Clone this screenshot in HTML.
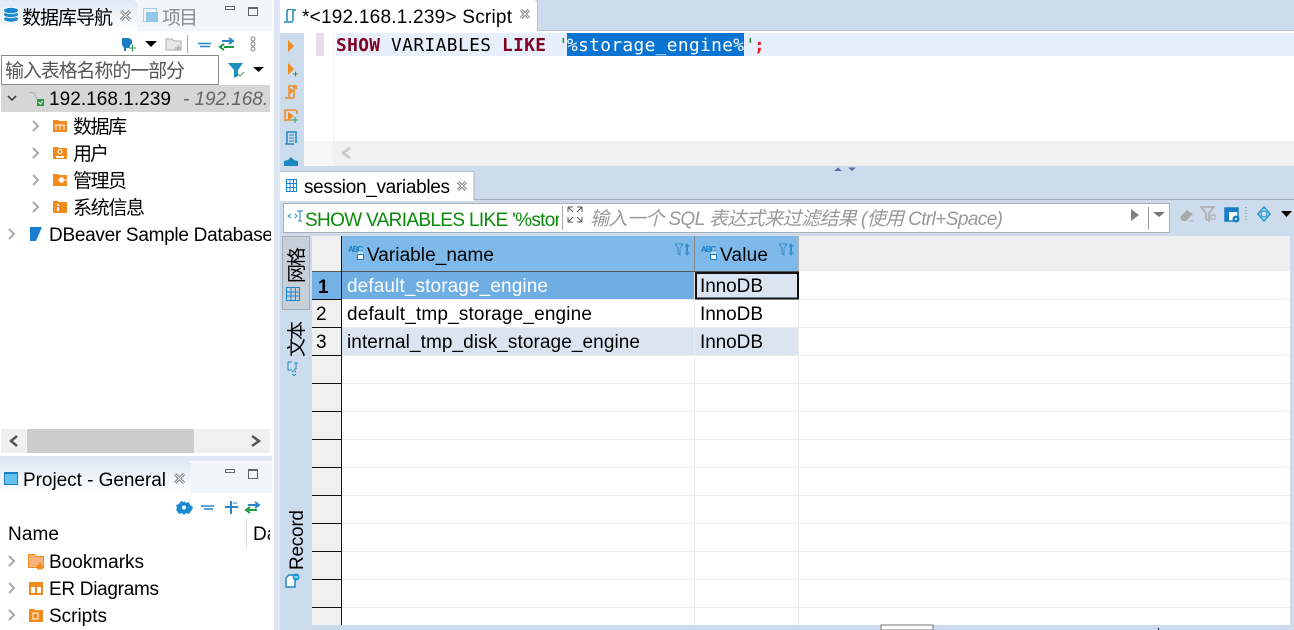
<!DOCTYPE html>
<html><head><meta charset="utf-8"><style>
html,body{margin:0;padding:0;background:#cddcec;width:1294px;height:630px;overflow:hidden}
svg{display:block}
text{font-family:"Liberation Sans","Noto Sans CJK SC",sans-serif;font-size:19px;fill:#000;white-space:pre}
.m{font-family:"DejaVu Sans Mono","Liberation Mono",monospace;font-size:17.8px}
</style></head><body>
<svg width="1294" height="630" viewBox="0 0 1294 630" xmlns="http://www.w3.org/2000/svg">
<defs>
<linearGradient id="tg" x1="0" y1="0" x2="0" y2="1"><stop offset="0" stop-color="#dfe8f3"/><stop offset="1" stop-color="#fff"/></linearGradient>
</defs>
<rect width="1294" height="630" fill="#cddcec"/>
<!-- left column -->
<rect x="0" y="0" width="280" height="630" fill="#dfe7f5"/>
<rect x="0" y="0" width="272" height="456" fill="#fff"/>
<rect x="137" y="0" width="135" height="31" fill="#f2f5fa"/>
<path d="M0 0H133Q137 0 137 4V31H0Z" fill="url(#tg)"/>
<rect x="272" y="0" width="2" height="630" fill="#fff"/>
<rect x="0" y="461" width="272" height="169" fill="#fff"/>
<rect x="191" y="461" width="81" height="32" fill="#f2f5fa"/>
<path d="M0 461H187Q191 461 191 465V493H0Z" fill="url(#tg)"/>
<rect x="272" y="461" width="2" height="169" fill="#fff"/>
<!-- left tabs -->
<g fill="#1a8ad0" stroke="#fff" stroke-width=".8"><ellipse cx="11" cy="19" rx="7.500" ry="3.200"/><ellipse cx="11" cy="14.500" rx="7.500" ry="3.200"/><ellipse cx="11" cy="10.500" rx="7.500" ry="3.200"/></g>
<text x="22" y="24" font-size="18" textLength="91">数据库导航</text>
<path d="M121 11l9 9M130 11l-9 9" stroke="#777" stroke-width="3"/><path d="M121 11l9 9M130 11l-9 9" stroke="#fff" stroke-width="1"/>
<rect x="143.500" y="8.500" width="13" height="13" fill="none" stroke="#a8cde8"/><rect x="146" y="12" width="12" height="10" fill="#8fc8e8"/>
<text x="162" y="24" font-size="18" style="fill:#8a8a8a" textLength="36">项目</text>
<rect x="225.500" y="6.500" width="9" height="3" fill="none" stroke="#666"/>
<rect x="248.500" y="7.500" width="9" height="8" fill="none" stroke="#666"/><rect x="248" y="7" width="10" height="2" fill="#666"/>
<!-- nav toolbar -->
<path d="M122 38h7l3 2v4h-1l-2 4h-3v3h-2v-3l-2-3z" fill="#1b7fc4"/><path d="M129 48h7M132.500 44.500v7" stroke="#2a9a4a"/>
<path d="M145 41h12l-6 6z" fill="#000"/>
<path d="M166 39h6l2 2h7v9h-15z" fill="#e8e8e8" stroke="#aaa"/><path d="M175 48h6M178 45v6" stroke="#999"/>
<rect x="187" y="35" width="1" height="18" fill="#aaa"/>
<path d="M198 43.500h13M200 46.500h10" stroke="#2a86cc" stroke-width="1.500"/>
<path d="M222 41h10M229 38l4 3-4 3" fill="none" stroke="#2a86cc" stroke-width="2"/><path d="M224 47h10M224 44l-4 3 4 3" fill="none" stroke="#1a9a3a" stroke-width="2"/>
<circle cx="253" cy="39" r="2" fill="none" stroke="#888"/><circle cx="253" cy="44" r="2" fill="none" stroke="#888"/><circle cx="253" cy="49" r="2" fill="none" stroke="#888"/>
<!-- filter -->
<rect x="1.500" y="55.500" width="217" height="29" fill="#fff" stroke="#8a8a8a"/>
<text x="5" y="77" font-size="18" style="fill:#555" textLength="180">输入表格名称的一部分</text>
<path d="M228 63h15l-5 7v6l-4 2v-8z" fill="#1a8fc0"/><path d="M238 74l2 2 4-4" fill="none" stroke="#3aaa5a"/>
<path d="M253 67h11l-5.500 5z" fill="#000"/>
<!-- tree -->
<rect x="1" y="85" width="269" height="27" fill="#d6d6d6"/>
<path d="M8 96l4 4 4-4" fill="none" stroke="#333" stroke-width="1.500"/>
<path d="M29 92l5 1 3 6" fill="none" stroke="#aaa"/><rect x="37" y="99" width="7" height="7" fill="#2a9a4a"/><path d="M38.500 102l2 2 2-3" fill="none" stroke="#fff"/>
<text x="49" y="105" textLength="122">192.168.1.239</text>
<text x="183" y="105" style="fill:#666;font-style:italic" textLength="85">- 192.168.</text>
<g fill="none" stroke="#aaa" stroke-width="2"><path d="M33 121l5 5-5 5"/><path d="M33 148l5 5-5 5"/><path d="M33 175l5 5-5 5"/><path d="M33 202l5 5-5 5"/></g>
<g fill="#f28a1e"><path d="M53 120h5l1 1h8v11h-14z"/><path d="M53 147h5l1 1h8v11h-14z"/><path d="M53 174h5l1 1h8v11h-14z"/><path d="M53 201h5l1 1h8v11h-14z"/></g>
<path d="M55 125h10M56 125v5M60 125v5M64 125v5" stroke="#fff"/>
<circle cx="60" cy="151.500" r="2" fill="none" stroke="#fff"/><path d="M56 157h8" stroke="#fff" stroke-width="2"/>
<path d="M58 180h9M60 178h3v4h-3z" stroke="#fff" fill="#fff"/>
<rect x="57" y="204" width="2" height="2" fill="#fff"/><rect x="57" y="207" width="2" height="4" fill="#fff"/>
<text x="73" y="133" font-size="18" textLength="54">数据库</text>
<text x="73" y="160" font-size="18" textLength="36">用户</text>
<text x="73" y="187" font-size="18" textLength="54">管理员</text>
<text x="73" y="214" font-size="18" textLength="72">系统信息</text>
<path d="M9 229l5 5-5 5" fill="none" stroke="#aaa" stroke-width="2"/>
<path d="M30 227h12l-3 9-3 5h-6z" fill="#1a7fd0"/><path d="M43 226l-6 14" stroke="#fff"/>
<svg x="49" y="215" width="222" height="30"><text x="0" y="26" textLength="224">DBeaver Sample Database</text></svg>
<!-- scrollbar -->
<rect x="1" y="429" width="269" height="24" fill="#f0f0f0"/><rect x="27" y="429" width="167" height="24" fill="#cdcdcd"/>
<path d="M17 436l-6 5 6 5M252 436l7 5-7 5" fill="none" stroke="#555" stroke-width="2.500"/>
<!-- project -->
<rect x="4.500" y="472.500" width="13" height="12" fill="#62c4ee" stroke="#1a7fc0"/><rect x="4" y="472" width="14" height="2" fill="#1a7fc0"/>
<text x="23" y="486" textLength="143">Project - General</text>
<path d="M175 474l9 9M184 474l-9 9" stroke="#777" stroke-width="3"/><path d="M175 474l9 9M184 474l-9 9" stroke="#fff" stroke-width="1"/>
<rect x="225.500" y="469.500" width="9" height="3" fill="none" stroke="#666"/>
<rect x="248.500" y="469.500" width="9" height="9" fill="none" stroke="#666"/><rect x="248" y="469" width="10" height="2" fill="#666"/>
<path d="M184 501l2 2 3-1 1 3 3 2-1 3-1 1-2 3-3-1-2 2-2-2-3 1-2-3-1-1 1-2-1-3 3-1 2-3 3 1z" fill="#1a8ad0"/><circle cx="184" cy="507.500" r="2" fill="#fff"/>
<path d="M201 506h13M204 509h9" stroke="#2a86cc" stroke-width="1.500"/>
<path d="M225 507h13M231 501v13" stroke="#2a86cc" stroke-width="2"/><path d="M233 503h4" stroke="#2a86cc"/>
<path d="M248 505h10M255 502l4 3-4 3" fill="none" stroke="#2a86cc" stroke-width="2"/><path d="M248 510h9M250 507l-4 3 4 3" fill="none" stroke="#1a9a3a" stroke-width="2"/>
<text x="8" y="540" textLength="51">Name</text>
<rect x="246" y="518" width="1" height="30" fill="#e0e0e0"/>
<svg x="0" y="518" width="270" height="30"><text x="253" y="22">Da</text></svg>
<g fill="none" stroke="#aaa" stroke-width="2"><path d="M9 556l5 5-5 5"/><path d="M9 583l5 5-5 5"/><path d="M9 610l5 5-5 5"/></g>
<path d="M28.500 554.500h6l2 2h7v11h-15z" fill="#fbb27a" stroke="#f28a1e"/><path d="M40 562l1.500 3 3 .4-2.200 2 .7 3-3-1.500-3 1.500.7-3-2.200-2 3-.4z" fill="#f28a1e"/>
<path d="M29 582h14v13h-14z" fill="#f28a1e"/><rect x="31" y="587" width="4" height="6" fill="#fff"/><rect x="37" y="587" width="4" height="6" fill="#fff"/>
<path d="M29 609h5l1 1h8v12h-14z" fill="#f28a1e"/><path d="M33 613h5v6h-5z" fill="none" stroke="#fff"/>
<text x="49" y="568" textLength="95">Bookmarks</text>
<text x="49" y="595" textLength="110">ER Diagrams</text>
<text x="49" y="622" textLength="58">Scripts</text>

<!-- right side -->
<rect x="280" y="31" width="1014" height="135" fill="#fff"/>
<path d="M280 31V0H533Q537 0 537 4V31Z" fill="#fff"/>
<rect x="537" y="30" width="757" height="1" fill="#b4c2d2"/>
<rect x="537" y="0" width="1" height="31" fill="#b4c2d2"/>
<path d="M287 10v11M284 22h9M293 21V10h3" fill="none" stroke="#1c86c4" stroke-width="1.500"/><path d="M287 9.500h6" stroke="#1c86c4"/>
<text x="302" y="23" textLength="210">*&lt;192.168.1.239&gt; Script</text>
<path d="M521 10l8 8M529 10l-8 8" stroke="#777" stroke-width="3"/><path d="M521 10l8 8M529 10l-8 8" stroke="#fff" stroke-width="1"/>
<!-- editor -->
<rect x="280" y="33" width="24" height="133" fill="#cddcec"/>
<rect x="316" y="33" width="8" height="23" fill="#ead9ea"/>
<rect x="336" y="33" width="958" height="23" fill="#e6effb"/>
<rect x="333" y="33" width="1" height="108" fill="#f2f2f2"/>
<rect x="567" y="33" width="177" height="23" fill="#0a74d2"/>
<rect x="304" y="141" width="990" height="25" fill="#f0f0f0"/>
<rect x="304" y="141" width="29" height="25" fill="#f6f6f6"/>
<path d="M350 148l-7 5 7 5" fill="none" stroke="#c8c8c8" stroke-width="2.500"/>
<text class="m" x="336" y="51" style="fill:#7f0020;font-weight:bold" textLength="44">SHOW</text>
<text class="m" x="391" y="51" style="fill:#000" textLength="100">VARIABLES</text>
<text class="m" x="502" y="51" style="fill:#7f0020;font-weight:bold" textLength="44">LIKE</text>
<text class="m" x="558" y="51" style="fill:#2a8a2a">'</text>
<text class="m" x="567" y="51" style="fill:#fff" textLength="177">%storage_engine%</text>
<text class="m" x="745" y="51" style="fill:#2a8a2a">'</text>
<text class="m" x="754" y="51" style="fill:#e02020;font-weight:bold">;</text>
<!-- editor side icons -->
<path d="M288 40l6 6-6 6z" fill="#f28a1e"/>
<path d="M288 63l6 6-6 6z" fill="#f28a1e"/><path d="M293 74h5M295.500 71.500v5" stroke="#3a9a4a"/>
<path d="M285 98h9M289 97V86h8M296 86v3M294 86v12" fill="none" stroke="#f28a1e" stroke-width="1.500"/><path d="M290 88l4 3-4 3z" fill="#f28a1e"/>
<path d="M284 120h8M285 119v-9h10l2 1v3" fill="none" stroke="#f28a1e" stroke-width="1.500"/><path d="M288 112l6 4-6 4z" fill="#f28a1e"/><path d="M292 120h6M295 117v6" stroke="#3a9a4a"/>
<path d="M285 144h9M287 144V132h9v11" fill="none" stroke="#1c86c4" stroke-width="1.500"/><path d="M289 135h5M289 138h5M289 141h5" stroke="#1c86c4"/>
<path d="M284 166v-5l4-1 3-3 3 3 4 1v5z" fill="#1c86c4"/>
<rect x="280" y="166" width="1014" height="34" fill="#cddcec"/>
<path d="M834 171l4-3.500 4 3.500zM848 167.500h8l-4 3.500z" fill="#5f67a5"/>
<!-- results tab -->
<rect x="280" y="172" width="194" height="29" fill="#fff"/>
<path d="M474 172v28" stroke="#a9b4c2"/><path d="M280 171.500h194" stroke="#b4c2d2"/>
<rect x="474" y="199" width="820" height="1" fill="#a6b0bc"/>
<g fill="none" stroke="#1a86d0"><rect x="286.500" y="179.500" width="10" height="12"/><path d="M286 183.500h11M286 187.500h11M290 180v11M293.500 180v11"/></g>
<text x="304" y="193" textLength="146">session_variables</text>
<path d="M458 182l8 8M466 182l-8 8" stroke="#777" stroke-width="3"/><path d="M458 182l8 8M466 182l-8 8" stroke="#fff" stroke-width="1"/>
<!-- filter bar -->
<rect x="283.500" y="203.500" width="886" height="29" fill="#fff" stroke="#aab0b8"/>
<path d="M291 214l-3 2 3 2M295 214l2 2-2 2" fill="none" stroke="#1c86c4"/><path d="M297 211h6M300 211v10M298 221h4" fill="none" stroke="#1c86c4"/>
<svg x="305" y="205" width="254" height="26"><text x="0" y="21" style="fill:#0a8a0a" textLength="256">SHOW VARIABLES LIKE '%stor</text></svg>
<rect x="562" y="206" width="1" height="24" fill="#aaa"/>
<path d="M568 207h5M568 207v5M568 207l5 5M582 207h-5M582 207v5M582 207l-5 5M568 222h5M568 222v-5M568 222l5-5M582 222h-5M582 222v-5M582 222l-5-5" fill="none" stroke="#555"/>
<text x="590" y="225" style="fill:#999;font-style:italic" textLength="413">输入一个 SQL 表达式来过滤结果 (使用 Ctrl+Space)</text>
<path d="M1131 209l8 6-8 6z" fill="#808080"/>
<rect x="1148" y="207" width="1" height="22" fill="#999"/>
<path d="M1153 212h12l-6 5z" fill="#777"/>
<path d="M1180 217l7-7 6 4-7 7h-4z" fill="#aaa"/><path d="M1189 221h4" stroke="#aaa"/>
<path d="M1201 207h13l-5 6v8l-3-2v-6z" fill="none" stroke="#aaa" stroke-width="1.500"/><rect x="1211" y="215" width="4" height="4" fill="none" stroke="#aaa"/>
<rect x="1225" y="208" width="13" height="13" fill="#fff" stroke="#1a7fc4" stroke-width="1.500"/><rect x="1225" y="208" width="13" height="4" fill="#1a7fc4"/><rect x="1225" y="208" width="4" height="13" fill="#1a7fc4"/><circle cx="1236" cy="219" r="3.500" fill="#1a7fc4"/><circle cx="1236" cy="219" r="1" fill="#fff"/>
<path d="M1246 207v1M1246 210v1M1246 213v1M1246 216v1M1246 219v1" stroke="#aaa" stroke-width="2"/>
<path d="M1264 207l6 7-6 7-6-7z" fill="none" stroke="#1c96d0" stroke-width="1.500"/><circle cx="1264" cy="214" r="3" fill="none" stroke="#1c96d0"/>
<path d="M1281 211h11l-5.500 6z" fill="#000"/>
<!-- left strip of results -->
<rect x="282.500" y="236.500" width="27" height="73" fill="#c6d0da" stroke="#a6aeb6"/>
<g fill="none" stroke="#1a86d0"><rect x="286.500" y="287.500" width="13" height="13"/><path d="M286 292h14M286 296h14M291 288v13M295.500 288v13"/></g>
<text transform="translate(303,283) rotate(-90)" font-size="17" textLength="36">网格</text>
<text transform="translate(303,357) rotate(-90)" font-size="17" textLength="36">文本</text>
<path d="M288 362h4M288 362v8h4M294 363h4M296 363v6M294 369h2" fill="none" stroke="#1c86c4"/><path d="M292 372l2-1.500 2 1.500M292 374l2 1.500 2-1.500" fill="none" stroke="#1c86c4"/>
<text transform="translate(303,570) rotate(-90)" font-size="18" textLength="60">Record</text>
<path d="M286 587v-9l3-3h6v12z" fill="#fff" stroke="#1c86c4" stroke-width="1.500"/><circle cx="296" cy="577" r="3.500" fill="#1c96d8"/><path d="M294 577h4" stroke="#fff"/>
<!-- grid -->
<rect x="312" y="236" width="978" height="389" fill="#fff"/>
<rect x="312" y="236" width="30" height="389" fill="#f0f0f0"/>
<rect x="799" y="236" width="491" height="35" fill="#efefef"/>
<rect x="342" y="236" width="456" height="35" fill="#7fb9ea"/>
<rect x="694" y="236" width="1" height="35" fill="#8a8a8a"/>
<rect x="798" y="236" width="1" height="35" fill="#a8b0b8"/>
<rect x="312" y="271" width="487" height="1" fill="#555"/>
<rect x="312" y="272" width="30" height="27" fill="#74b2e6"/>
<rect x="342" y="272" width="352" height="27" fill="#6eaee3"/>
<rect x="342" y="328" width="352" height="27" fill="#dbe5f1"/>
<rect x="695" y="328" width="103" height="27" fill="#dbe5f1"/>
<g fill="#ececec">
<rect x="342" y="299" width="948" height="1"/><rect x="342" y="327" width="948" height="1"/><rect x="342" y="355" width="948" height="1"/><rect x="342" y="383" width="948" height="1"/><rect x="342" y="411" width="948" height="1"/><rect x="342" y="439" width="948" height="1"/><rect x="342" y="467" width="948" height="1"/><rect x="342" y="495" width="948" height="1"/><rect x="342" y="523" width="948" height="1"/><rect x="342" y="551" width="948" height="1"/><rect x="342" y="579" width="948" height="1"/><rect x="342" y="607" width="948" height="1"/>
<rect x="694" y="272" width="1" height="353"/><rect x="798" y="272" width="1" height="353"/>
</g>
<g fill="#111">
<rect x="312" y="299" width="30" height="1"/><rect x="312" y="327" width="30" height="1"/><rect x="312" y="355" width="30" height="1"/><rect x="312" y="383" width="30" height="1"/><rect x="312" y="411" width="30" height="1"/><rect x="312" y="439" width="30" height="1"/><rect x="312" y="467" width="30" height="1"/><rect x="312" y="495" width="30" height="1"/><rect x="312" y="523" width="30" height="1"/><rect x="312" y="551" width="30" height="1"/><rect x="312" y="579" width="30" height="1"/><rect x="312" y="607" width="30" height="1"/>
<rect x="341" y="236" width="1" height="389"/>
</g>
<rect x="696" y="273" width="102" height="25.500" fill="#dbe5f1" stroke="#111" stroke-width="2"/>
<text x="348" y="252" style="fill:#1a7fc4;font-size:8px;font-weight:bold" textLength="15">ABC</text>
<rect x="357.500" y="254.500" width="6" height="5" fill="#fff" stroke="#1a7fc4"/><path d="M359 254v-2h3v2" fill="none" stroke="#fff"/>
<text x="701" y="252" style="fill:#1a7fc4;font-size:8px;font-weight:bold" textLength="15">ABC</text>
<rect x="710.500" y="254.500" width="6" height="5" fill="#fff" stroke="#1a7fc4"/><path d="M712 254v-2h3v2" fill="none" stroke="#fff"/>
<text x="367" y="261" textLength="127">Variable_name</text>
<text x="720" y="261" textLength="48">Value</text>
<g fill="none" stroke="#3a8ec8">
<path d="M675 244h8l-3 4v7l-2-1v-6z"/><path d="M687 244v11" stroke-width="2"/><path d="M685 247l2-3 2 3M685 252l2 3 2-3"/>
<path d="M779 244h8l-3 4v7l-2-1v-6z"/><path d="M791 244v11" stroke-width="2"/><path d="M789 247l2-3 2 3M789 252l2 3 2-3"/>
</g>
<text x="318" y="293" style="font-weight:bold">1</text>
<text x="316" y="320">2</text>
<text x="316" y="348">3</text>
<text x="347" y="292" style="fill:#fff" textLength="201">default_storage_engine</text>
<text x="347" y="320" textLength="245">default_tmp_storage_engine</text>
<text x="347" y="348" textLength="293">internal_tmp_disk_storage_engine</text>
<text x="700" y="292" textLength="63">InnoDB</text>
<text x="700" y="320" textLength="63">InnoDB</text>
<text x="700" y="348" textLength="63">InnoDB</text>
<!-- bottom edge -->
<rect x="881" y="625" width="52" height="5" fill="#fff" stroke="#777"/>
<rect x="1158" y="628" width="1" height="2" fill="#111"/>
</svg>
</body></html>
